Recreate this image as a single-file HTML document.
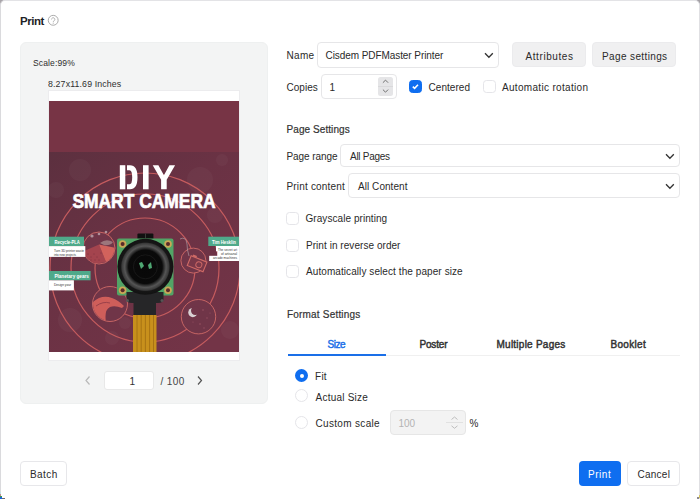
<!DOCTYPE html>
<html><head><meta charset="utf-8">
<style>
*{margin:0;padding:0;box-sizing:border-box}
html,body{width:700px;height:499px;overflow:hidden;background:#fff}
body{font-family:"Liberation Sans",sans-serif;color:#2a2a2a;position:relative}
.a{position:absolute;white-space:nowrap}
.t{font-size:9.6px;line-height:12px}
.frame{position:absolute;left:0;top:0;width:700px;height:499px;background:#fff;border-left:1px solid #dadadd;border-right:1px solid #e0e0e3;border-top:1px solid #e3e3e6;border-radius:5px 5px 0 0}
.panel{position:absolute;left:20px;top:42px;width:248px;height:362px;background:#f3f4f4;border-radius:6px;border:1px solid #eef0f0}
.sel{position:absolute;background:#fff;border:1px solid #e6e6e8;border-radius:4px}
.btn{position:absolute;border-radius:4px;text-align:center}
.cb{position:absolute;width:13px;height:13px;border:1px solid #e5e5e9;border-radius:3.5px;background:#fff}
.rd{position:absolute;width:13px;height:13px;border:1px solid #e5e5e9;border-radius:50%;background:#fff}
.chev{position:absolute}
</style></head><body>
<div class="a" style="left:0;top:0;width:5px;height:5px;background:#a9a5aa"></div>
<div class="a" style="left:695px;top:0;width:5px;height:5px;background:#a29ea3"></div>
<div class="frame"></div>
<div class="a" style="left:0;top:492px;width:1px;height:2px;background:#bfe3e3"></div>
<div class="a" style="left:0;top:494px;width:1px;height:2px;background:#c08a90"></div>
<div class="a" style="left:0;top:496px;width:2px;height:1px;background:#3f9a4a"></div>
<div class="a" style="left:0;top:497px;width:2px;height:2px;background:#1a66dd"></div>
<div class="a" style="left:2px;top:498px;width:3px;height:1px;background:#6a6a70"></div>
<div class="a" style="left:699px;top:495px;width:1px;height:3px;background:#d6c25a"></div>
<div class="a" style="left:697px;top:497px;width:2px;height:2px;background:#8c8890"></div>
<!-- title -->
<svg class="a" style="left:47px;top:14px" width="13" height="13" viewBox="0 0 13 13"><circle cx="6.2" cy="6.3" r="4.95" fill="none" stroke="#a8a8a8" stroke-width="0.95"/><path d="M4.55 5.4a1.65 1.65 0 1 1 2.5 1.42c-.5.3-.85.6-.85 1.2v.25" fill="none" stroke="#a8a8a8" stroke-width="0.9"/><circle cx="6.2" cy="9.35" r="0.5" fill="#a8a8a8"/></svg>

<!-- left panel -->
<div class="panel"></div>
<div class="a" style="left:48px;top:90px;width:192px;height:271px;background:#fff;border:1px solid #ececee"></div>
<svg class="a" style="left:49px;top:101px" width="190" height="251" viewBox="49 101 190 251">
<defs>
<linearGradient id="bgG" x1="0" y1="0" x2="0.8" y2="1">
<stop offset="0" stop-color="#5c303f"/><stop offset="0.45" stop-color="#6a3244"/><stop offset="1" stop-color="#733447"/>
</linearGradient>
<radialGradient id="lensG" cx="0.5" cy="0.5" r="0.5">
<stop offset="0" stop-color="#080808"/><stop offset="0.6" stop-color="#0a0a0a"/><stop offset="0.66" stop-color="#2c2c2c"/><stop offset="0.74" stop-color="#555"/><stop offset="0.84" stop-color="#3a3a3a"/><stop offset="0.88" stop-color="#161616"/><stop offset="1" stop-color="#121212"/>
</radialGradient>
</defs>
<rect x="49" y="101" width="190" height="51" fill="#773445"/>
<rect x="49" y="152" width="190" height="200" fill="url(#bgG)"/>
<g fill="#ffffff" opacity="0.028">
<circle cx="80" cy="170" r="11"/><circle cx="56" cy="190" r="8"/><circle cx="200" cy="180" r="13"/><circle cx="222" cy="160" r="6"/><circle cx="70" cy="320" r="12"/><circle cx="112" cy="338" r="7"/><circle cx="125" cy="323" r="6"/><circle cx="230" cy="330" r="9"/><circle cx="215" cy="215" r="8"/>
</g>
<g fill="none" stroke="#c65c5e" stroke-width="1.2">
<circle cx="145" cy="268" r="95"/>
<circle cx="145" cy="268" r="74"/>
<circle cx="145" cy="268" r="50"/>
</g>
<!-- topic circles -->
<g stroke="#cf6a66" stroke-width="0.9" fill="#703548">
<circle cx="99" cy="248" r="16"/>
<circle cx="193.4" cy="260.6" r="12.5"/>
<circle cx="110" cy="304" r="17.5"/>
<circle cx="198.5" cy="316.7" r="17.2"/>
</g>
<clipPath id="c1"><circle cx="99" cy="248" r="15.5"/></clipPath>
<clipPath id="c2"><circle cx="110" cy="304" r="17"/></clipPath>
<g clip-path="url(#c1)">
<path d="M82 252 L99 244.5 L106 262 L82 266Z" fill="#a4444e"/>
<path d="M99 244.5 L116 248 L116 266 L106 262Z" fill="#d2625c"/>
<g fill="#7a3040"><circle cx="88" cy="254" r="0.55"/><circle cx="91" cy="257" r="0.55"/><circle cx="94" cy="254" r="0.55"/><circle cx="97" cy="257" r="0.55"/><circle cx="91" cy="260" r="0.55"/><circle cx="95" cy="260" r="0.55"/><circle cx="99" cy="260" r="0.55"/><circle cx="101" cy="253" r="0.55"/></g>
<path d="M100 243 Q106 238 113 242 Q110 246 104 245Z" fill="#c8b8b0" opacity="0.5"/>
</g>
<g clip-path="url(#c2)">
<path d="M92 303 Q101 294 112 298 Q118 300 124 306 L122 308 Q115 305 110 307 Q104 310 106 322 L92 322Z" fill="#cf5e5a"/>
<path d="M96 306 Q103 301 110 303" fill="none" stroke="#8e3a46" stroke-width="0.8"/>
</g>
<path d="M180 239 Q186 236 187 244 Q187 250 189 256" fill="none" stroke="#b8aaae" stroke-width="0.6"/>
<g transform="rotate(22 197 264)"><rect x="188.5" y="258.5" width="17" height="10.5" fill="#7a3848" stroke="#cf6a66" stroke-width="1.1"/><circle cx="199" cy="264" r="3" fill="none" stroke="#cf6a66" stroke-width="1"/><rect x="190" y="256.5" width="4" height="2" fill="#cf6a66"/></g>
<circle cx="192.8" cy="312.6" r="4.6" fill="#d8d0d2"/><circle cx="195.3" cy="310.6" r="4.3" fill="#703548"/><g fill="#a86070" opacity="0.7"><circle cx="203" cy="310" r="0.8"/><circle cx="207" cy="318" r="0.7"/><circle cx="200" cy="324" r="0.8"/><circle cx="193" cy="322" r="0.6"/><circle cx="210" cy="313" r="0.6"/><circle cx="204" cy="328" r="0.7"/></g>
<g fill="#fff" opacity="0.45"><circle cx="92" cy="236" r="1.6"/><circle cx="99" cy="234" r="1.3"/><circle cx="106" cy="232" r="1.3"/></g>
<!-- title DIY stencil -->
<g fill="#fff">
<rect x="119.8" y="165.2" width="5.5" height="24.1"/>
<path d="M127 165.2 H130 Q137.5 165.2 137.5 177.25 Q137.5 189.3 130 189.3 H127 V184.3 H129.5 Q132.2 184.3 132.2 177.25 Q132.2 170.2 129.5 170.2 H127Z"/>
<rect x="143" y="165.2" width="5.6" height="24.1"/>
<path d="M152.7 165.2 H158.4 L163.9 175.2 L169.4 165.2 H175.1 L166.7 179.8 V189.3 H161.1 V179.8Z"/>
</g>
<text x="72.4" y="208.3" font-family="Liberation Sans" font-weight="bold" font-size="20.5" fill="#fff" stroke="#fff" stroke-width="0.7" textLength="143.2" lengthAdjust="spacingAndGlyphs">SMART CAMERA</text>
<!-- labels -->
<rect x="49" y="236.7" width="35" height="9.4" fill="#4fa98a"/>
<rect x="49" y="246.1" width="36.3" height="10.8" fill="#fff"/>
<rect x="49" y="271" width="41.6" height="9.3" fill="#4fa98a"/>
<rect x="49" y="280.3" width="24.9" height="10.1" fill="#fff"/>
<rect x="208.3" y="236.7" width="30.7" height="9.3" fill="#4fa98a"/>
<rect x="216" y="246" width="23" height="5.3" fill="#fff"/><rect x="217.3" y="251" width="21.7" height="5" fill="#fff"/><rect x="209.2" y="255.8" width="29.8" height="5.2" fill="#fff"/>
<g font-family="Liberation Sans" font-size="6.2" fill="#fff" font-weight="bold"><text x="54.4" y="243.8" textLength="25.5" lengthAdjust="spacingAndGlyphs">Recycle-PLA</text><text x="54.4" y="278.2" textLength="34.5" lengthAdjust="spacingAndGlyphs">Planetary gears</text><text x="212" y="243.6" textLength="24" lengthAdjust="spacingAndGlyphs">Tim Hesklin</text></g>
<g font-family="Liberation Sans" font-size="3.9" fill="#333"><text x="54" y="251.6" textLength="30" lengthAdjust="spacingAndGlyphs">Turn 3D printer waste</text><text x="54" y="255.6" textLength="22" lengthAdjust="spacingAndGlyphs">into new projects</text><text x="54" y="286.3" textLength="17" lengthAdjust="spacingAndGlyphs">Design your</text>
<text x="237" y="250.5" text-anchor="end" textLength="19" lengthAdjust="spacingAndGlyphs">The secret art</text><text x="237" y="254.5" text-anchor="end" textLength="16" lengthAdjust="spacingAndGlyphs">of artisanal</text><text x="237" y="258.5" text-anchor="end" textLength="24" lengthAdjust="spacingAndGlyphs">arcade machines</text></g>
<!-- camera -->
<rect x="137.4" y="233.4" width="16" height="8" rx="1" fill="#111"/>
<rect x="145" y="233.4" width="1" height="5" fill="#3a3a3a"/>
<rect x="117" y="238.5" width="56.5" height="57" rx="2" fill="#52a466"/>
<g fill="#c9a756"><circle cx="122.6" cy="244" r="3.8"/><circle cx="168" cy="244" r="3.8"/><circle cx="122.6" cy="290.3" r="3.8"/><circle cx="168" cy="290.3" r="3.8"/></g>
<g fill="#5a2a2a"><circle cx="122.6" cy="244" r="2"/><circle cx="168" cy="244" r="2"/><circle cx="122.6" cy="290.3" r="2"/><circle cx="168" cy="290.3" r="2"/></g>
<path d="M126.5 292 L163.5 292 L163.5 299 Q163.5 303 158 303 L156 303 L156 315 L133.5 315 L133.5 303 L132 303 Q126.5 303 126.5 299Z" fill="#262628"/><circle cx="127.5" cy="300.5" r="1.5" fill="#555"/><circle cx="162" cy="300.5" r="1.5" fill="#555"/>
<circle cx="145.4" cy="266.8" r="28" fill="url(#lensG)"/>
<circle cx="145.4" cy="266.8" r="12" fill="none" stroke="#1c1c1c" stroke-width="0.8"/>
<path d="M139 263 L142 262 L144 266 L141 269Z" fill="#4fa873"/>
<path d="M148 265 L151 262 L152 268 L149 269Z" fill="#4fa873"/>
<rect x="133" y="315" width="23.5" height="37" fill="#c8901c"/>
<g stroke="#a06c12" stroke-width="0.8"><path d="M137 315V352M141.2 315V352M145.4 315V352M149.6 315V352M153.5 315V352"/></g>
</svg>


<!-- pagination -->
<svg class="a" style="left:84px;top:375px" width="8" height="11"><path d="M5.5 1.5L2 5.5L5.5 9.5" fill="none" stroke="#b9b9b9" stroke-width="1.2"/></svg>
<div class="a" style="left:103.5px;top:370.5px;width:50px;height:19px;background:#fff;border:1px solid #e8e8e8;border-radius:3px"></div>
<svg class="a" style="left:196px;top:375px" width="8" height="11"><path d="M2 1.5L5.5 5.5L2 9.5" fill="none" stroke="#555" stroke-width="1.2"/></svg>

<!-- right side -->
<div class="sel" style="left:316.9px;top:42.1px;width:181.9px;height:25.5px"></div>
<svg class="chev" style="left:484px;top:52px" width="10" height="7"><path d="M1 1.2L4.9 5.2L8.8 1.2" fill="none" stroke="#333" stroke-width="1.3"/></svg>
<div class="btn" style="left:512px;top:42px;width:73.7px;height:25px;background:#f0f0f1;border:1px solid #ebebed"></div>
<div class="btn" style="left:592px;top:42px;width:84px;height:25px;background:#f0f0f1;border:1px solid #ebebed"></div>

<div class="sel" style="left:320.6px;top:74.1px;width:76px;height:25px"></div>
<div class="a" style="left:377.7px;top:77.1px;width:15.7px;height:18.8px;background:#e5e5e7;border-radius:2.5px"></div>
<div class="a" style="left:377.7px;top:86.2px;width:15.7px;height:0.7px;background:#d9d9db"></div>
<svg class="a" style="left:377.7px;top:77.1px" width="16" height="19" viewBox="377.7 77.1 16 19"><path d="M382.6 82.8L385.2 80.2L387.8 82.8" fill="none" stroke="#707070" stroke-width="1"/><path d="M382.6 89.7L385.2 92.3L387.8 89.7" fill="none" stroke="#707070" stroke-width="1"/></svg>

<div class="cb" style="left:409px;top:80px;background:#0f6ef0;border-color:#0f6ef0"></div>
<svg class="a" style="left:409px;top:80px" width="13" height="13"><path d="M3.8 6.6L5.6 8.3L9 4.8" fill="none" stroke="#fff" stroke-width="1.6"/></svg>
<div class="cb" style="left:482.5px;top:80px"></div>

<div class="sel" style="left:340px;top:143.9px;width:340px;height:23px"></div>
<svg class="chev" style="left:665px;top:153px" width="10" height="7"><path d="M1 1.2L4.9 5.2L8.8 1.2" fill="none" stroke="#333" stroke-width="1.3"/></svg>
<div class="sel" style="left:348.1px;top:173.1px;width:331.9px;height:25px"></div>
<svg class="chev" style="left:665px;top:183px" width="10" height="7"><path d="M1 1.2L4.9 5.2L8.8 1.2" fill="none" stroke="#333" stroke-width="1.3"/></svg>

<div class="cb" style="left:286px;top:212px"></div>
<div class="cb" style="left:286px;top:238.5px"></div>
<div class="cb" style="left:286px;top:265px"></div>

<div class="a" style="left:287.5px;top:354.5px;width:392px;height:1px;background:#f0f0f0"></div>
<div class="a" style="left:287.5px;top:354px;width:98px;height:2px;background:#1a6fe8"></div>

<div class="rd" style="left:295px;top:369px;background:#0f6ef0;border:4.5px solid #0f6ef0;"></div>
<div class="a" style="left:299.5px;top:373.5px;width:4px;height:4px;border-radius:50%;background:#fff"></div>
<div class="rd" style="left:295px;top:389px"></div>
<div class="rd" style="left:295px;top:416px"></div>
<div class="a" style="left:389.8px;top:409.8px;width:76px;height:25.6px;background:#f3f3f3;border:1px solid #e6e6e6;border-radius:4px"></div>
<svg class="a" style="left:446px;top:414px" width="17" height="17"><path d="M5.5 5.5L8.5 3L11.5 5.5" fill="none" stroke="#b8b8b8" stroke-width="0.9"/><path d="M0 8.5h17" stroke="#dcdcdc" stroke-width="0.8"/><path d="M5.5 11.8L8.5 14.3L11.5 11.8" fill="none" stroke="#b8b8b8" stroke-width="0.9"/></svg>

<!-- footer -->
<div class="btn" style="left:20px;top:461px;width:47px;height:25px;border:1px solid #e7e7ea;background:#fff"></div>
<div class="btn" style="left:578.5px;top:461px;width:42.5px;height:25px;background:#0f6ef0"></div>
<div class="btn" style="left:627px;top:461px;width:52.5px;height:25px;border:1px solid #e7e7ea;background:#fff"></div>
<div id="ttl" class="a t" style="left:20.00px;top:14.72px;font-size:11.5px;line-height:13.8px;font-weight:bold;color:#1e2226;letter-spacing:-0.450px;transform:scaleX(1.0000);transform-origin:0 0;">Print</div>
<div id="scl" class="a t" style="left:33.10px;top:56.72px;font-size:9.8px;line-height:11.76px;font-weight:normal;color:#2e2e2e;letter-spacing:0.150px;transform:scaleX(0.8698);transform-origin:0 0;">Scale:99%</div>
<div id="inch" class="a t" style="left:47.50px;top:77.72px;font-size:9.8px;line-height:11.76px;font-weight:normal;color:#2e2e2e;letter-spacing:0.150px;transform:scaleX(0.8963);transform-origin:0 0;">8.27x11.69 Inches</div>
<div id="pg1" class="a t" style="left:129.50px;top:375.54px;font-size:10px;line-height:12.0px;font-weight:normal;color:#333;letter-spacing:0.000px;transform:scaleX(1.0000);transform-origin:0 0;">1</div>
<div id="pg100" class="a t" style="left:160.50px;top:375.54px;font-size:10px;line-height:12.0px;font-weight:normal;color:#444;letter-spacing:0.405px;transform:scaleX(1.0000);transform-origin:0 0;">/ 100</div>
<div id="name" class="a t" style="left:286.50px;top:49.53px;font-size:10px;line-height:12.0px;font-weight:normal;color:#2a2a2a;letter-spacing:0.300px;transform:scaleX(1.0000);transform-origin:0 0;">Name</div>
<div id="cis" class="a t" style="left:325.50px;top:49.53px;font-size:10px;line-height:12.0px;font-weight:normal;color:#2a2a2a;letter-spacing:-0.070px;transform:scaleX(1.0000);transform-origin:0 0;">Cisdem PDFMaster Printer</div>
<div id="attr" class="a t" style="left:525.50px;top:50.53px;font-size:10px;line-height:12.0px;font-weight:normal;color:#2a2a2a;letter-spacing:0.580px;transform:scaleX(1.0000);transform-origin:0 0;">Attributes</div>
<div id="pset" class="a t" style="left:602.00px;top:50.53px;font-size:10px;line-height:12.0px;font-weight:normal;color:#2a2a2a;letter-spacing:0.375px;transform:scaleX(1.0000);transform-origin:0 0;">Page settings</div>
<div id="cop" class="a t" style="left:286.50px;top:81.53px;font-size:10px;line-height:12.0px;font-weight:normal;color:#2a2a2a;letter-spacing:0.036px;transform:scaleX(1.0000);transform-origin:0 0;">Copies</div>
<div id="one" class="a t" style="left:329.50px;top:81.53px;font-size:10px;line-height:12.0px;font-weight:normal;color:#2a2a2a;letter-spacing:0.000px;transform:scaleX(1.0000);transform-origin:0 0;">1</div>
<div id="cent" class="a t" style="left:428.50px;top:81.53px;font-size:10px;line-height:12.0px;font-weight:normal;color:#2a2a2a;letter-spacing:0.051px;transform:scaleX(1.0000);transform-origin:0 0;">Centered</div>
<div id="auto" class="a t" style="left:502.00px;top:81.53px;font-size:10px;line-height:12.0px;font-weight:normal;color:#2a2a2a;letter-spacing:0.318px;transform:scaleX(1.0000);transform-origin:0 0;">Automatic rotation</div>
<div id="psh" class="a t" style="left:286.50px;top:123.53px;font-size:10px;line-height:12.0px;font-weight:normal;color:#333;letter-spacing:0.075px;transform:scaleX(1.0000);transform-origin:0 0;-webkit-text-stroke:0.2px #333">Page Settings</div>
<div id="prange" class="a t" style="left:286.50px;top:150.53px;font-size:10px;line-height:12.0px;font-weight:normal;color:#2a2a2a;letter-spacing:-0.080px;transform:scaleX(1.0000);transform-origin:0 0;">Page range</div>
<div id="allp" class="a t" style="left:350.00px;top:150.53px;font-size:10px;line-height:12.0px;font-weight:normal;color:#2a2a2a;letter-spacing:-0.270px;transform:scaleX(1.0000);transform-origin:0 0;">All Pages</div>
<div id="pcont" class="a t" style="left:286.50px;top:180.53px;font-size:10px;line-height:12.0px;font-weight:normal;color:#2a2a2a;letter-spacing:0.180px;transform:scaleX(1.0000);transform-origin:0 0;">Print content</div>
<div id="allc" class="a t" style="left:358.00px;top:180.53px;font-size:10px;line-height:12.0px;font-weight:normal;color:#2a2a2a;letter-spacing:0.054px;transform:scaleX(1.0000);transform-origin:0 0;">All Content</div>
<div id="gray" class="a t" style="left:305.50px;top:212.53px;font-size:10px;line-height:12.0px;font-weight:normal;color:#2a2a2a;letter-spacing:0.064px;transform:scaleX(1.0000);transform-origin:0 0;">Grayscale printing</div>
<div id="rev" class="a t" style="left:306.00px;top:239.53px;font-size:10px;line-height:12.0px;font-weight:normal;color:#2a2a2a;letter-spacing:0.051px;transform:scaleX(1.0000);transform-origin:0 0;">Print in reverse order</div>
<div id="asel" class="a t" style="left:306.00px;top:265.54px;font-size:10px;line-height:12.0px;font-weight:normal;color:#2a2a2a;letter-spacing:0.079px;transform:scaleX(1.0000);transform-origin:0 0;">Automatically select the paper size</div>
<div id="fmt" class="a t" style="left:287.00px;top:308.54px;font-size:10px;line-height:12.0px;font-weight:normal;color:#333;letter-spacing:0.193px;transform:scaleX(1.0000);transform-origin:0 0;-webkit-text-stroke:0.2px #333">Format Settings</div>
<div id="tsize" class="a t" style="left:327.50px;top:338.54px;font-size:10px;line-height:12.0px;font-weight:normal;color:#1a6fe8;letter-spacing:-0.450px;transform:scaleX(1.0000);transform-origin:0 0;-webkit-text-stroke:0.45px #1a6fe8">Size</div>
<div id="tpost" class="a t" style="left:419.50px;top:338.54px;font-size:10px;line-height:12.0px;font-weight:normal;color:#333;letter-spacing:-0.180px;transform:scaleX(1.0000);transform-origin:0 0;-webkit-text-stroke:0.45px #333">Poster</div>
<div id="tmul" class="a t" style="left:496.50px;top:338.54px;font-size:10px;line-height:12.0px;font-weight:normal;color:#333;letter-spacing:0.242px;transform:scaleX(1.0000);transform-origin:0 0;-webkit-text-stroke:0.45px #333">Multiple Pages</div>
<div id="tbook" class="a t" style="left:610.50px;top:338.54px;font-size:10px;line-height:12.0px;font-weight:normal;color:#333;letter-spacing:0.300px;transform:scaleX(1.0000);transform-origin:0 0;-webkit-text-stroke:0.45px #333">Booklet</div>
<div id="fit" class="a t" style="left:315.00px;top:370.54px;font-size:10px;line-height:12.0px;font-weight:normal;color:#2a2a2a;letter-spacing:0.270px;transform:scaleX(1.0000);transform-origin:0 0;">Fit</div>
<div id="act" class="a t" style="left:315.50px;top:391.54px;font-size:10px;line-height:12.0px;font-weight:normal;color:#2a2a2a;letter-spacing:0.234px;transform:scaleX(1.0000);transform-origin:0 0;">Actual Size</div>
<div id="cust" class="a t" style="left:315.50px;top:417.54px;font-size:10px;line-height:12.0px;font-weight:normal;color:#2a2a2a;letter-spacing:0.327px;transform:scaleX(1.0000);transform-origin:0 0;">Custom scale</div>
<div id="h100" class="a t" style="left:398.50px;top:417.54px;font-size:10px;line-height:12.0px;font-weight:normal;color:#b4b4b4;letter-spacing:0.000px;transform:scaleX(1.0000);transform-origin:0 0;">100</div>
<div id="pct" class="a t" style="left:469.50px;top:417.54px;font-size:10px;line-height:12.0px;font-weight:normal;color:#2a2a2a;letter-spacing:0.000px;transform:scaleX(1.0000);transform-origin:0 0;">%</div>
<div id="batch" class="a t" style="left:30.00px;top:468.54px;font-size:10px;line-height:12.0px;font-weight:normal;color:#2a2a2a;letter-spacing:0.405px;transform:scaleX(1.0000);transform-origin:0 0;">Batch</div>
<div id="bprint" class="a t" style="left:588.00px;top:468.54px;font-size:10px;line-height:12.0px;font-weight:normal;color:#fff;letter-spacing:0.540px;transform:scaleX(1.0000);transform-origin:0 0;">Print</div>
<div id="cancel" class="a t" style="left:637.50px;top:468.54px;font-size:10px;line-height:12.0px;font-weight:normal;color:#2a2a2a;letter-spacing:0.252px;transform:scaleX(1.0000);transform-origin:0 0;">Cancel</div>
</body></html>
